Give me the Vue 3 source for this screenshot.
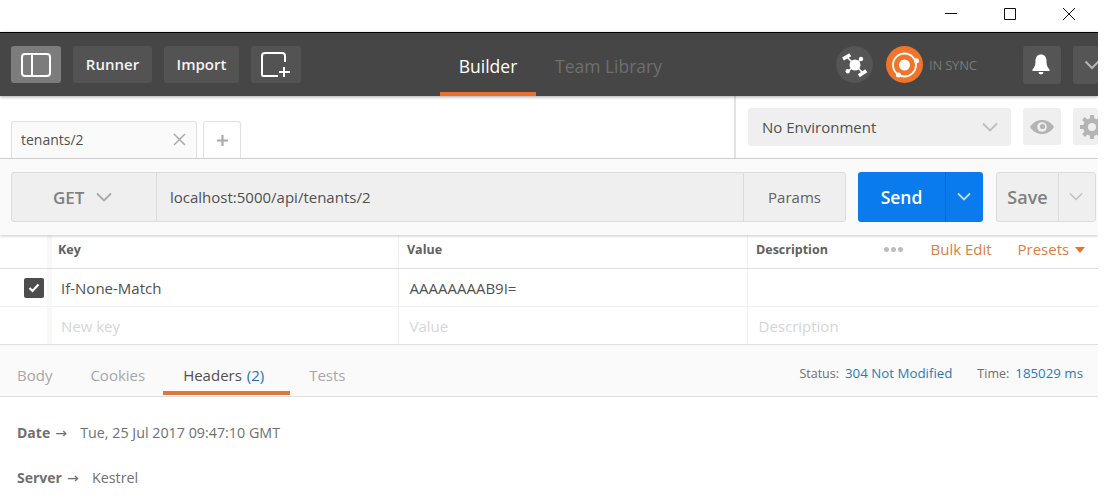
<script setup>
const rows = [
  { key: 'If-None-Match', value: 'AAAAAAAAB9I=', desc: '', checked: true, ph: false },
  { key: 'New key', value: 'Value', desc: 'Description', checked: false, ph: true },
]
const respHeaders = [
  { name: 'Date', value: 'Tue, 25 Jul 2017 09:47:10 GMT' },
  { name: 'Server', value: 'Kestrel' },
]
</script>

<template>
  <div class="page">
    <div class="titlebar">
      <svg class="win" width="14" height="14" viewBox="0 0 14 14"><path d="M1 6.500h12" stroke="#111" fill="none"/></svg>
      <svg class="win" width="14" height="14" viewBox="0 0 14 14"><path d="M1.500 1.500h11v11h-11z" stroke="#111" fill="none"/></svg>
      <svg class="win" width="14" height="14" viewBox="0 0 14 14"><path d="M1 1l12 12M13 1L1 13" stroke="#111" fill="none"/></svg>
    </div>

    <header class="topbar">
      <div class="top-left">
        <button class="tb-btn icon active">
          <svg width="30" height="24" viewBox="0 0 30 24"><rect x="1" y="1" width="28" height="22" rx="3" fill="none" stroke="#fff" stroke-width="2"/><path d="M11 1v22" stroke="#fff" stroke-width="2"/></svg>
        </button>
        <button class="tb-btn text w79">Runner</button>
        <button class="tb-btn text w75">Import</button>
        <button class="tb-btn icon">
          <svg width="30" height="26" viewBox="0 0 30 26"><path d="M24 10V4a3 3 0 0 0-3-3H4a3 3 0 0 0-3 3v19a1 1 0 0 0 1 1h15" fill="none" stroke="#fff" stroke-width="2"/><path d="M23 15v10M18 20h11" stroke="#fff" stroke-width="2"/></svg>
        </button>
      </div>
      <nav class="top-nav">
        <div class="nav-item on">Builder</div>
        <div class="nav-item">Team Library</div>
      </nav>
      <div class="top-right">
        <div class="round grey">
          <svg width="28" height="26" viewBox="0 0 28 26"><path d="M14 13L6 5M14 13l8 8M14 13l6-6M14 13l-7 6.500" stroke="#fff" stroke-width="1.600"/><circle cx="14" cy="13" r="5.500" fill="#fff"/><path d="M2 7l7.300-4.300M17.700 23.700l7.600-5" stroke="#fff" stroke-width="3.600" fill="none"/><circle cx="20" cy="7" r="2.200" fill="#fff"/><circle cx="6.700" cy="19.300" r="2.200" fill="#fff"/></svg>
        </div>
        <div class="round orange">
          <svg width="36" height="36" viewBox="0 0 36 36"><circle cx="17.500" cy="18" r="11.500" fill="none" stroke="#fff" stroke-width="1.800"/><circle cx="17.500" cy="18" r="5.500" fill="#fff"/><circle cx="29.500" cy="13.700" r="2.500" fill="#fff"/><circle cx="11.500" cy="28" r="2.500" fill="#fff"/></svg>
        </div>
        <span class="sync">IN SYNC</span>
        <button class="sq bell">
          <svg width="18" height="21" viewBox="0 0 18 21"><path d="M9 0.500c-3.500 0-5.500 2.700-5.500 6 0 4.500-.8 6.500-3 9v1.500h17v-1.500c-2.200-2.500-3-4.500-3-9 0-3.300-2-6-5.500-6z" fill="#fff"/><path d="M6.500 18a2.500 2.500 0 0 0 5 0z" fill="#fff"/></svg>
        </button>
        <button class="sq more">
          <svg width="16" height="10" viewBox="0 0 16 10"><path d="M1.500 1.500L8 8l6.500-6.500" fill="none" stroke="#b5b5b5" stroke-width="2"/></svg>
        </button>
      </div>
    </header>

    <section class="tabs-row">
      <div class="tabs">
        <div class="tab">
          <span>tenants/2</span>
          <svg width="13" height="13" viewBox="0 0 13 13"><path d="M1 1l11 11M12 1L1 12" stroke="#aaa" stroke-width="1.500" fill="none"/></svg>
        </div>
        <div class="tab-add">
          <svg width="11" height="11" viewBox="0 0 11 11"><path d="M5.500 0v11M0 5.500h11" stroke="#aaa" stroke-width="2.200"/></svg>
        </div>
      </div>
      <div class="env">
        <div class="env-select">
          <span>No Environment</span>
          <svg width="16" height="10" viewBox="0 0 16 10"><path d="M1 1.500L8 8.500l7-7" fill="none" stroke="#bdbdbd" stroke-width="1.800"/></svg>
        </div>
        <button class="env-btn">
          <svg width="26" height="16" viewBox="0 0 26 16"><path d="M1 8c3-4.700 7-7 12-7s9 2.300 12 7c-3 4.700-7 7-12 7S4 12.700 1 8z" fill="#b4b4b4"/><circle cx="13" cy="8" r="4.800" fill="#efefef"/><circle cx="13.500" cy="7.500" r="2.600" fill="#b4b4b4"/></svg>
        </button>
        <button class="env-btn gear">
          <svg width="26" height="26" viewBox="0 0 26 26"><circle cx="13" cy="13" r="6.500" fill="none" stroke="#b4b4b4" stroke-width="5"/><path d="M13 1v24M1 13h24M4.500 4.500l17 17M21.500 4.500l-17 17" stroke="#b4b4b4" stroke-width="4"/><circle cx="13" cy="13" r="4" fill="#efefef"/></svg>
        </button>
      </div>
    </section>

    <section class="req-row">
      <div class="url-group">
        <div class="method">
          <span>GET</span>
          <svg width="16" height="10" viewBox="0 0 16 10"><path d="M1 1.500L8 8.500l7-7" fill="none" stroke="#a8a8a8" stroke-width="1.800"/></svg>
        </div>
        <div class="url">localhost:5000/api/tenants/2</div>
        <div class="params">Params</div>
      </div>
      <div class="send">
        <span class="send-label">Send</span>
        <span class="send-caret">
          <svg width="14" height="9" viewBox="0 0 14 9"><path d="M1 1.500L7 7.500l6-6" fill="none" stroke="#bfdcf8" stroke-width="1.800"/></svg>
        </span>
      </div>
      <div class="save">
        <span class="save-label">Save</span>
        <span class="save-caret">
          <svg width="14" height="9" viewBox="0 0 14 9"><path d="M1 1.500L7 7.500l6-6" fill="none" stroke="#bdbdbd" stroke-width="1.500"/></svg>
        </span>
      </div>
    </section>

    <section class="table">
      <div class="t-row t-head">
        <div class="c-check"></div>
        <div class="c-key">Key</div>
        <div class="c-val">Value</div>
        <div class="c-desc">Description</div>
        <div class="c-actions">
          <span class="dots"><i></i><i></i><i></i></span>
          <span class="link bulk">Bulk Edit</span>
          <span class="link presets">Presets<b class="tri"></b></span>
        </div>
      </div>
      <div v-for="(r, i) in rows" :key="r.key" class="t-row t-body" :class="{ ph: r.ph, first: i === 0 }">
        <div class="c-check">
          <span v-if="r.checked" class="check">
            <svg width="12" height="10" viewBox="0 0 12 10"><path d="M1.500 5l3 3 6-6.500" fill="none" stroke="#fff" stroke-width="2.200"/></svg>
          </span>
        </div>
        <div class="c-key">{{ r.key }}</div>
        <div class="c-val">{{ r.value }}</div>
        <div class="c-desc">{{ r.desc }}</div>
      </div>
    </section>

    <section class="resp-tabs">
      <div class="r-tab">Body</div>
      <div class="r-tab">Cookies</div>
      <div class="r-tab on">Headers <em>(2)</em></div>
      <div class="r-tab">Tests</div>
      <div class="status">
        <span>Status:</span><span class="blue s1">304 Not Modified</span>
        <span class="s2">Time:</span><span class="blue s1">185029 ms</span>
      </div>
    </section>

    <section class="resp-list">
      <div v-for="h in respHeaders" :key="h.name" class="resp-line">
        <b>{{ h.name }}</b><span class="arrow">→</span><span class="rv">{{ h.value }}</span>
      </div>
    </section>
  </div>
</template>

<style>
html, body { margin: 0; background: #fff; overflow: hidden; }
</style>

<style scoped>
.page {
  width: 1098px;
  height: 498px;
  overflow: hidden;
  font-family: "Open Sans", "Liberation Sans", sans-serif;
  color: #505050;
  background: #fff;
}
button { font-family: inherit; border: 0; padding: 0; margin: 0; }
.titlebar {
  height: 32px;
  display: flex;
  justify-content: flex-end;
  align-items: flex-start;
  gap: 45px;
  padding: 7px 22px 0 0;
  box-sizing: border-box;
}
.win { display: block; flex: none; }
.topbar {
  height: 63px;
  box-sizing: content-box;
  border-top: 1px solid #000;
  background: #464646;
  box-shadow: 0 1px 3px rgba(0,0,0,.35);
  position: relative;
  display: flex;
  align-items: flex-start;
}
.top-left {
  display: flex;
  gap: 12px;
  padding: 13px 0 0 11px;
  width: 440px;
  box-sizing: border-box;
  flex: none;
}
.tb-btn {
  height: 37px;
  background: #535353;
  border-radius: 3px;
  color: #f2f2f2;
  font-size: 15px;
  font-weight: 600;
  display: flex;
  align-items: center;
  justify-content: center;
}
.tb-btn.text { padding-bottom: 1px; box-sizing: border-box; }
.tb-btn.icon { width: 50px; }
.tb-btn.icon svg { display: block; }
.tb-btn.active { background: #7c7c7c; }
.w79 { width: 79px; }
.w75 { width: 75px; }
.top-nav { display: flex; height: 63px; }
.nav-item {
  font-size: 17.500px;
  color: #6f6f6f;
  height: 63px;
  line-height: 66px;
  box-sizing: border-box;
  padding: 0 19px;
  white-space: nowrap;
}
.nav-item.on {
  color: #fff;
  border-bottom: 4px solid #e8722b;
  width: 96px;
  text-align: center;
  padding: 0;
}
.top-right {
  margin-left: auto;
  display: flex;
  align-items: center;
  height: 63px;
  box-sizing: border-box;
}
.round {
  width: 37px;
  height: 37px;
  border-radius: 50%;
  display: flex;
  align-items: center;
  justify-content: center;
  flex: none;
}
.round.grey { background: #555; margin-right: 13px; }
.round.orange { background: #f0752a; }
.sync {
  font-size: 13px;
  color: #7a7a7a;
  margin-left: 6px;
  width: 94px;
  letter-spacing: -.2px;
  white-space: nowrap;
}
.sq {
  width: 38px;
  height: 38px;
  background: #555;
  border-radius: 3px;
  display: flex;
  align-items: center;
  justify-content: center;
  flex: none;
}
.sq.bell { margin-right: 12px; padding-right: 3px; box-sizing: border-box; }
.sq.more { width: 25px; justify-content: flex-start; padding-left: 11px; box-sizing: border-box; overflow: hidden; }
.sq.more svg { flex: none; }
.tabs-row {
  height: 63px;
  box-sizing: border-box;
  border-bottom: 1px solid #d8d8d8;
  display: flex;
  justify-content: space-between;
}
.tabs {
  display: flex;
  align-items: flex-end;
  gap: 6px;
  padding-left: 11px;
  width: 723px;
  box-sizing: content-box;
  border-right: 2px solid #e2e2e2;
}
.tab {
  width: 186px;
  height: 37px;
  box-sizing: border-box;
  border: 1px solid #e0e0e0;
  border-bottom: 0;
  border-radius: 3px 3px 0 0;
  background: #fafafa;
  font-size: 14px;
  color: #505050;
  display: flex;
  align-items: center;
  justify-content: space-between;
  padding: 0 10px 2px 9px;
}
.tab-add {
  width: 38px;
  height: 37px;
  box-sizing: border-box;
  border: 1px solid #e0e0e0;
  border-bottom: 0;
  border-radius: 3px 3px 0 0;
  display: flex;
  align-items: center;
  justify-content: center;
}
.env {
  flex: 1;
  display: flex;
  align-items: flex-start;
  gap: 12px;
  padding: 12px 0 0 12px;
  overflow: hidden;
}
.env-select {
  width: 263px;
  height: 38px;
  flex: none;
  border-radius: 3px;
  background: #efefef;
  font-size: 15px;
  color: #505050;
  display: flex;
  align-items: center;
  justify-content: space-between;
  padding: 0 13px 0 14px;
  box-sizing: border-box;
}
.env-btn {
  width: 38px;
  height: 37px;
  flex: none;
  background: #efefef;
  border-radius: 3px;
  display: flex;
  align-items: center;
  justify-content: center;
}
.env-btn.gear { justify-content: flex-start; padding-left: 6px; box-sizing: border-box; width: 25px; overflow: hidden; }
.env-btn.gear svg { flex: none; }
.req-row {
  height: 76px;
  box-sizing: border-box;
  background: #fafafa;
  display: flex;
  align-items: flex-start;
  padding: 13px 0 0 11px;
  box-shadow: 0 1px 3px rgba(0,0,0,.22);
  position: relative;
}
.url-group {
  width: 835px;
  height: 50px;
  box-sizing: border-box;
  border: 1px solid #dcdcdc;
  border-radius: 3px;
  background: #efefef;
  display: flex;
  flex: none;
}
.method {
  width: 145px;
  flex: none;
  box-sizing: border-box;
  border-right: 1px solid #dcdcdc;
  display: flex;
  align-items: center;
  gap: 12px;
  padding-left: 41px;
  font-size: 17px;
  font-weight: 600;
  color: #808080;
}
.url {
  flex: 1;
  font-size: 15px;
  color: #505050;
  line-height: 48px;
  padding-left: 13px;
}
.params {
  width: 102px;
  flex: none;
  box-sizing: border-box;
  border-left: 1px solid #dcdcdc;
  font-size: 15px;
  color: #606060;
  text-align: center;
  line-height: 48px;
}
.send {
  margin-left: 12px;
  width: 125px;
  height: 50px;
  flex: none;
  border-radius: 3px;
  background: #097bed;
  display: flex;
  color: #fff;
}
.send-label {
  width: 87px;
  text-align: center;
  font-size: 17.500px;
  font-weight: 600;
  line-height: 50px;
}
.send-caret {
  flex: 1;
  border-left: 1px solid #0868c8;
  display: flex;
  align-items: center;
  justify-content: center;
  padding-right: 2px;
  padding-bottom: 2px;
}
.save {
  margin-left: 13px;
  width: 100px;
  height: 50px;
  flex: none;
  box-sizing: border-box;
  border: 1px solid #dcdcdc;
  border-radius: 3px;
  background: #efefef;
  display: flex;
}
.save-label {
  width: 61px;
  text-align: center;
  font-size: 18px;
  font-weight: 600;
  color: #808080;
  line-height: 48px;
}
.save-caret {
  flex: 1;
  border-left: 1px solid #dcdcdc;
  display: flex;
  align-items: center;
  justify-content: center;
  padding-right: 2px;
  padding-bottom: 2px;
}
.table { border-bottom: 1px solid #dedede; }
.t-row { display: flex; }
.t-head {
  height: 34px;
  box-sizing: border-box;
  border-bottom: 1px solid #dedede;
  font-size: 12.500px;
  font-weight: 700;
  color: #606060;
  line-height: 29px;
}
.t-body {
  height: 37px;
  box-sizing: border-box;
  font-size: 15px;
  color: #505050;
  line-height: 38px;
}
.t-body.first { border-bottom: 1px solid #f2f2f2; height: 38px; }
.t-body.ph { color: #d6d6d6; }
.c-check {
  width: 52px;
  flex: none;
  box-sizing: border-box;
  display: flex;
  align-items: center;
  justify-content: flex-end;
  padding-right: 3px;
  border-right: 5px solid #f8f8f8;
}
.c-key {
  width: 347px;
  flex: none;
  box-sizing: border-box;
  padding-left: 6px;
  border-right: 1px solid #f1f1f1;
}
.t-body .c-key { padding-left: 9px; }
.c-val {
  width: 349px;
  flex: none;
  box-sizing: border-box;
  padding-left: 8px;
  border-right: 1px solid #f1f1f1;
}
.t-body .c-val { padding-left: 10.500px; }
.c-desc {
  flex: none;
  width: 122px;
  box-sizing: border-box;
  padding-left: 8px;
  white-space: nowrap;
}
.t-body .c-desc { padding-left: 10.500px; flex: 1; }
.c-actions {
  flex: 1;
  display: flex;
  align-items: flex-start;
  font-weight: 400;
  font-size: 15px;
  line-height: 29px;
}
.dots {
  display: flex;
  gap: 2px;
  width: 60.500px;
  padding-left: 14px;
  height: 29px;
  align-items: center;
  box-sizing: border-box;
  flex: none;
}
.dots i { width: 5px; height: 5px; border-radius: 50%; background: #bcbcbc; display: block; }
.link { color: #d9803f; white-space: nowrap; }
.bulk { width: 87px; flex: none; }
.tri {
  display: inline-block;
  margin-left: 6px;
  vertical-align: 2px;
  border-left: 5px solid transparent;
  border-right: 5px solid transparent;
  border-top: 6px solid #e8722b;
}
.check {
  width: 20px;
  height: 20px;
  border-radius: 2px;
  background: #4d4d4d;
  display: flex;
  align-items: center;
  justify-content: center;
}
.resp-tabs {
  height: 52px;
  box-sizing: border-box;
  background: #fafafa;
  border-bottom: 1px solid #dedede;
  display: flex;
  font-size: 15px;
}
.r-tab {
  color: #a8a8a8;
  line-height: 60px;
  height: 50px;
  padding: 0 18px 0 19px;
  box-sizing: border-box;
  white-space: nowrap;
}
.r-tab:first-child { padding-left: 17px; padding-right: 19px; }
.r-tab.on {
  color: #505050;
  border-bottom: 4px solid #d9793c;
  padding: 0 0 0 20px;
  width: 127px;
}
.r-tab.on em { font-style: normal; color: #2a6fb3; margin-left: 1px; }
.status {
  margin-left: auto;
  padding-right: 15px;
  font-size: 12.500px;
  line-height: 56px;
  color: #707070;
  white-space: nowrap;
}
.blue { color: #2a7ab8; font-size: 13.300px; }
.s1 { margin-left: 6px; }
.s2 { margin-left: 25px; }
.resp-list { padding: 26px 0 0 17px; }
.resp-line {
  font-size: 14.300px;
  height: 45px;
  line-height: 20px;
  color: #707070;
  white-space: nowrap;
}
.resp-line b { font-weight: 700; color: #707070; font-size: 14px; }
.arrow {
  display: inline-block;
  width: 12px;
  margin: 0 13px 0 5px;
  color: #707070;
  font-family: "DejaVu Sans", sans-serif;
  font-size: 14px;
  line-height: 16px;
}
.rv { color: #707070; }
</style>
